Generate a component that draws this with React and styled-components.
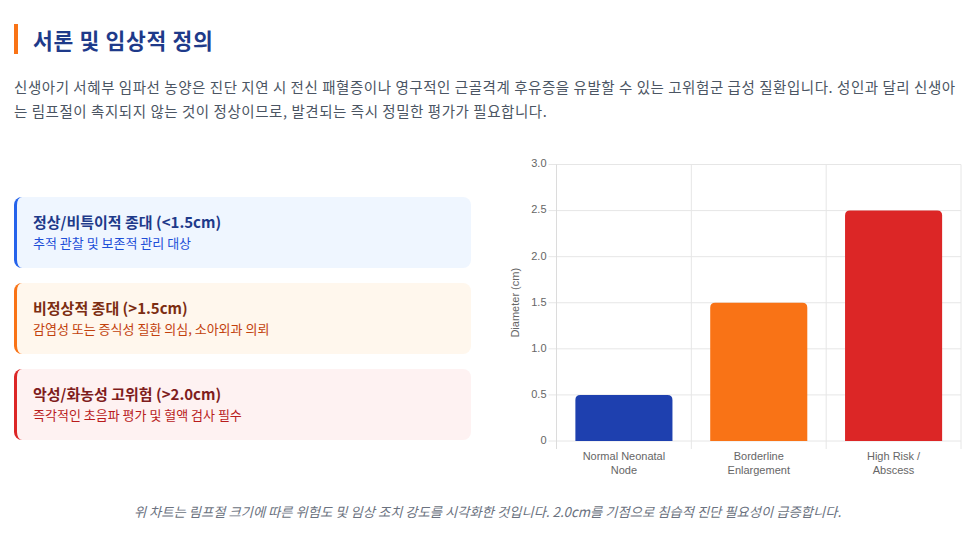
import React from "react";
import styled, { createGlobalStyle } from "styled-components";

const GlobalStyle = createGlobalStyle`
  html, body {
    margin: 0;
    padding: 0;
    background: #ffffff;
  }
  body {
    font-family: "Noto Sans CJK KR", "Noto Sans", sans-serif;
    color: #374151;
  }
`;

const levels = [
  {
    key: "normal",
    title: "정상/비특이적 종대 (<1.5cm)",
    desc: "추적 관찰 및 보존적 관리 대상",
    bg: "#eff6ff",
    border: "#2563eb",
    titleColor: "#1e3a8a",
    descColor: "#1d4ed8",
  },
  {
    key: "border",
    title: "비정상적 종대 (>1.5cm)",
    desc: "감염성 또는 증식성 질환 의심, 소아외과 의뢰",
    bg: "#fff7ed",
    border: "#f97316",
    titleColor: "#7c2d12",
    descColor: "#c2410c",
  },
  {
    key: "risk",
    title: "악성/화농성 고위험 (>2.0cm)",
    desc: "즉각적인 초음파 평가 및 혈액 검사 필수",
    bg: "#fef2f2",
    border: "#dc2626",
    titleColor: "#7f1d1d",
    descColor: "#b91c1c",
  },
];

const bars = [
  { label: ["Normal Neonatal", "Node"], value: 0.5, color: "#1e40af" },
  { label: ["Borderline", "Enlargement"], value: 1.5, color: "#f97316" },
  { label: ["High Risk /", "Abscess"], value: 2.5, color: "#dc2626" },
];

// chart geometry (svg units = px)
const W = 458;
const H = 324;
const LEFT = 53.5;
const RIGHT = 458;
const TOP = 8.5;
const BOTTOM = 285;
const MAX = 3;
const yOf = (v) => BOTTOM - ((BOTTOM - TOP) * v) / MAX;
const catW = (RIGHT - LEFT) / bars.length;
const barW = catW * 0.72;

function barPath(x, y, w, h, r) {
  return `M${x},${y + h} L${x},${y + r} Q${x},${y} ${x + r},${y} L${x + w - r},${y} Q${x + w},${y} ${x + w},${y + r} L${x + w},${y + h} Z`;
}

function DiameterChart() {
  const ticks = [0, 0.5, 1, 1.5, 2, 2.5, 3];
  return (
    <ChartSvg viewBox={`0 0 ${W} ${H}`} width={W} height={H}>
      {ticks.map((t) => (
        <g key={t}>
          <line x1={LEFT - 8} x2={RIGHT} y1={yOf(t)} y2={yOf(t)} stroke="#e6e6e6" strokeWidth="1" />
          <TickText x={LEFT - 10} y={yOf(t)} textAnchor="end" dominantBaseline="middle">
            {t === 0 ? "0" : t.toFixed(1)}
          </TickText>
        </g>
      ))}
      {[0, 1, 2, 3].map((i) => (
        <line
          key={i}
          x1={LEFT + catW * i}
          x2={LEFT + catW * i}
          y1={TOP}
          y2={BOTTOM + 8}
          stroke={i === 0 ? "#dcdcdc" : "#e6e6e6"}
          strokeWidth="1"
        />
      ))}
      {bars.map((b, i) => {
        const x = LEFT + catW * i + (catW - barW) / 2;
        const y = yOf(b.value);
        return (
          <g key={b.label[0]}>
            <path d={barPath(x, y, barW, BOTTOM - y, 5)} fill={b.color} />
            {b.label.map((line, j) => (
              <TickText key={line} x={LEFT + catW * i + catW / 2} y={301.5 + j * 13.5} textAnchor="middle" dominantBaseline="middle">
                {line}
              </TickText>
            ))}
          </g>
        );
      })}
      <TickText
        x={13.5}
        y={(TOP + BOTTOM) / 2}
        textAnchor="middle"
        dominantBaseline="middle"
        transform={`rotate(-90 13.5 ${(TOP + BOTTOM) / 2})`}
      >
        Diameter (cm)
      </TickText>
    </ChartSvg>
  );
}

export default function App() {
  return (
    <>
      <GlobalStyle />
      <Page>
        <Heading>서론 및 임상적 정의</Heading>
        <Lead>
          신생아기 서혜부 임파선 농양은 진단 지연 시 전신 패혈증이나 영구적인 근골격계 후유증을 유발할 수 있는 고위험군 급성
          질환입니다. 성인과 달리 신생아는 림프절이 촉지되지 않는 것이 정상이므로, 발견되는 즉시 정밀한 평가가 필요합니다.
        </Lead>
        <Split>
          <CardList>
            {levels.map((l) => (
              <LevelCard key={l.key} $bg={l.bg} $border={l.border}>
                <CardTitle $color={l.titleColor}>{l.title}</CardTitle>
                <CardDesc $color={l.descColor}>{l.desc}</CardDesc>
              </LevelCard>
            ))}
          </CardList>
          <ChartBox>
            <DiameterChart />
          </ChartBox>
        </Split>
        <Caption>
          위 차트는 림프절 크기에 따른 위험도 및 임상 조치 강도를 시각화한 것입니다. 2.0cm를 기점으로 침습적 진단 필요성이 급증합니다.
        </Caption>
      </Page>
    </>
  );
}

const Page = styled.div`
  padding: 24px 14px 0;
`;

const Heading = styled.h2`
  margin: 0;
  border-left: 4px solid #f97316;
  padding-left: 15px;
  height: 30px;
  display: flex;
  align-items: center;
  font-size: 21.5px;
  letter-spacing: 0.7px;
  font-weight: 700;
  color: #1e3a8a;
`;

const Lead = styled.p`
  margin: 21px 0 0;
  font-size: 14.5px;
  letter-spacing: 0.55px;
  line-height: 24px;
  color: #4b5563;
`;

const Split = styled.div`
  display: grid;
  grid-template-columns: 1fr 1fr;
  gap: 32px;
  align-items: center;
  margin-top: 33px;
`;

const CardList = styled.div`
  display: flex;
  flex-direction: column;
  gap: 15px;
`;

const LevelCard = styled.div`
  height: 71px;
  box-sizing: border-box;
  display: flex;
  flex-direction: column;
  justify-content: center;
  gap: 2px;
  padding: 0 16px;
  background: ${(p) => p.$bg};
  border-left: 3px solid ${(p) => p.$border};
  border-radius: 8px;
`;

const CardTitle = styled.div`
  font-size: 15px;
  font-weight: 700;
  line-height: 20px;
  color: ${(p) => p.$color};
`;

const CardDesc = styled.div`
  font-size: 13px;
  line-height: 18px;
  color: ${(p) => p.$color};
`;

const ChartBox = styled.div`
  height: 324px;
`;

const ChartSvg = styled.svg`
  display: block;
  overflow: visible;
`;

const TickText = styled.text`
  font-family: "Liberation Sans", Arial, sans-serif;
  font-size: 11px;
  fill: #666666;
`;

const Caption = styled.p`
  margin: 22px 0 0;
  text-align: center;
  font-size: 13.3px;
  line-height: 20px;
  font-style: italic;
  color: #6b7280;
`;
